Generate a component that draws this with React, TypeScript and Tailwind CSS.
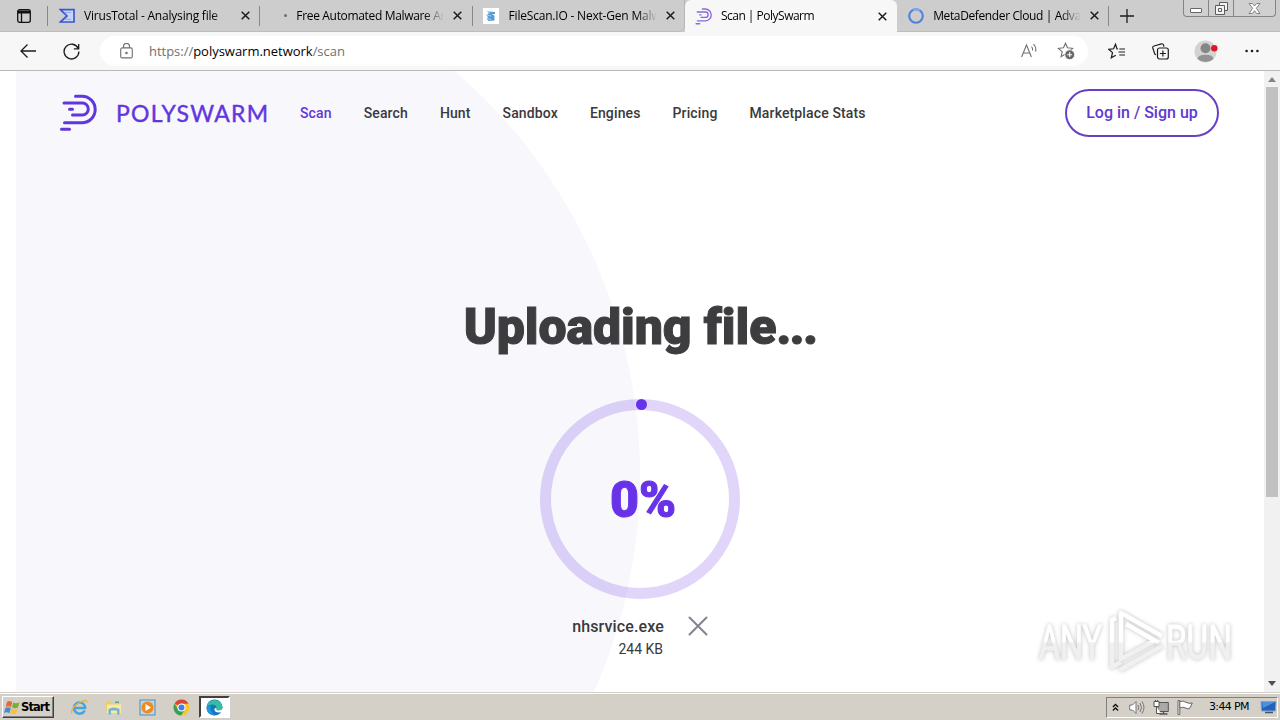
import React from "react";
import clsx from "clsx";

const CloseIcon = () => (
  <svg className="h-[9px] w-[9px] shrink-0" viewBox="0 0 9 9" stroke="#1c1c1c" strokeWidth={1.5}>
    <path d="M0.7 0.7L8.3 8.3M8.3 0.7L0.7 8.3" />
  </svg>
);

const PolyMark = ({ className, color = "#6236dd" }: { className: string; color?: string }) => (
  <svg className={className} viewBox="0 0 38 38" fill="none" stroke={color} strokeWidth={3} strokeLinecap="round">
    <path d="M16.5 2.3H23A13.2 13.2 0 0 1 23 28.7H5.5" />
    <path d="M5 9H23.3A6 6 0 0 1 23.3 21H13.5" />
    <path d="M10.5 15.2H13.5M2.5 35.3H10.5" />
  </svg>
);

const VirusTotalIcon = () => (
  <svg className="h-4 w-4" viewBox="0 0 16 16" fill="none" stroke="#3b57d4" strokeWidth={1.7}>
    <path d="M1.4 1.6H15V14H1.4L8 8Z" fill="#cbd5f6" />
    <path d="M5.5 4.5H12M5.5 11.3H12" strokeWidth={0.8} stroke="#8799e4" />
  </svg>
);

const LoadingDot = () => (
  <div className="ml-[13px] flex h-4 w-4 shrink-0 items-center justify-center">
    <div className="h-[3px] w-[3px] rounded-full bg-[#707070]" />
  </div>
);

const FileScanIcon = () => (
  <svg className="h-4 w-4 bg-white" viewBox="0 0 16 16">
    <path d="M5 3.5L12 4V6L8.5 6.5L11.5 7.5V12.5L5.5 13L3.5 10.5L5 9.5L3.5 7L5.5 6Z" fill="#5b9bd5" />
    <path d="M4 3.5L7 5M3.5 7L8 8M4 10.5L8 11.5" stroke="#a9cdec" />
  </svg>
);

const RingIcon = () => (
  <svg className="h-4 w-4" viewBox="0 0 16 16" fill="none">
    <circle cx="8" cy="8" r="6.8" stroke="#4a80dc" strokeWidth={2} />
    <path d="M5 2A6.8 6.8 0 0 1 12 2.5" stroke="#85a7e2" strokeWidth={2} />
  </svg>
);

const tabs = [
  { title: "VirusTotal - Analysing file", icon: <VirusTotalIcon />, tracking: "tracking-[-0.2px]" },
  { title: "Free Automated Malware An", icon: <LoadingDot />, tracking: "tracking-[-0.33px]" },
  { title: "FileScan.IO - Next-Gen Malw", icon: <FileScanIcon />, tracking: "tracking-[-0.2px]" },
  { title: "Scan | PolySwarm", icon: <PolyMark className="h-[17px] w-[17px]" color="#8a68dc" />, active: true, tracking: "tracking-[-0.5px]" },
  { title: "MetaDefender Cloud | Adva", icon: <RingIcon />, tracking: "tracking-[-0.38px]" },
];

const TabBar = () => (
  <div className="flex h-8 bg-[#cdcdcd]">
    <div className="flex w-12 shrink-0 items-center border-b border-[#bdbdbd] pl-[17px]">
      <svg className="h-[14px] w-[14px]" viewBox="0 0 14 14" fill="none" stroke="#111" strokeWidth={1.3}>
        <rect x="0.7" y="0.7" width="12.6" height="12.6" rx="2" />
        <path d="M1 3H13" strokeWidth={3} />
        <path d="M4.5 4V13" />
      </svg>
      <div className="ml-4 h-5 w-px bg-[#888]" />
    </div>
    {tabs.map((tab, i) => (
      <div
        key={tab.title}
        className={clsx(
          "flex w-[212.3px] shrink-0 items-center pl-[10px]",
          tab.active ? "rounded-t-md bg-[#f7f7f7]" : "border-b border-[#bdbdbd]",
          i === 2 && "rounded-br-md border-r border-r-[#b5b5b5]"
        )}
      >
        <div className="flex w-[17px] shrink-0 justify-center">{tab.icon}</div>
        <div
          className={clsx(
            "ml-[9px] w-[150px] shrink-0 font-['Open_Sans',sans-serif] text-xs whitespace-nowrap text-black",
            "[mask-image:linear-gradient(to_right,black_128px,transparent_148px)]",
            tab.tracking
          )}
        >
          {tab.title}
        </div>
        <div className="ml-[7px] flex">
          <CloseIcon />
        </div>
        {i !== 2 && i !== 3 && <div className="ml-auto h-5 w-px bg-[#888]" />}
      </div>
    ))}
    <div className="flex grow items-center justify-between border-b border-[#bdbdbd] pl-[11px]">
      <svg className="h-[14px] w-[14px]" viewBox="0 0 14 14" stroke="#1c1c1c" strokeWidth={1.3}>
        <path d="M7 0V14M0 7H14" />
      </svg>
      <div className="mr-1 flex h-[17px] w-[93px] self-start rounded-b-[4px] border border-t-0 border-[#858585] bg-[#d0d0d0]">
        <div className="flex w-[25px] items-end justify-center border-r border-[#858585] pb-[3px]">
          <div className="h-[5px] w-[12px] rounded-[1px] border border-[#666] bg-white" />
        </div>
        <div className="flex w-[25px] items-center justify-center border-r border-[#858585]">
          <svg className="h-[13px] w-[13px]" viewBox="0 0 13 13" fill="#f3f3f3" stroke="#5c5c5c">
            <path d="M4.5 0.5H12.5V8.5H4.5Z" />
            <path d="M0.5 3.5H9.5V12.5H0.5Z" />
            <path d="M3.5 6.5H6.5V9.5H3.5Z" />
          </svg>
        </div>
        <div className="flex grow items-center justify-center">
          <svg className="h-[11px] w-[13px]" viewBox="0 0 13 11" fill="#fff" stroke="#777" strokeWidth={0.9}>
            <path d="M1 .5H4.3L6.5 3L8.7 .5H12L8.3 5.3L12 10.5H8.7L6.5 7.7L4.3 10.5H1L4.7 5.3Z" />
          </svg>
        </div>
      </div>
    </div>
  </div>
);

const star = "M8.5 1.2L10.5 5.8L15.6 6.3L11.8 9.6L12.9 14.6L8.5 12L4.1 14.6L5.2 9.6L1.4 6.3L6.5 5.8Z";

const Toolbar = () => (
  <div className="flex h-[39px] items-center border-b border-[#b9b9b9] bg-[#f7f7f7] pl-5">
    <svg className="h-[14px] w-[16px]" viewBox="0 0 16 14" fill="none" stroke="#1c1c1c" strokeWidth={1.3}>
      <path d="M16 7H1M7.5 0.5L1 7L7.5 13.5" />
    </svg>
    <svg className="ml-[27px] h-[17px] w-[17px]" viewBox="0 0 17 17" fill="none" stroke="#1c1c1c" strokeWidth={1.3}>
      <path d="M15.2 5.4A7.4 7.4 0 1 0 15.9 8.5M15.7 1V5.8H10.9" />
    </svg>
    <div className="ml-[20px] flex h-[30px] w-[988px] items-center rounded-full bg-white pl-[20px] text-[#707070]">
      <svg className="h-[16px] w-[13px]" viewBox="0 0 13 16" fill="none" stroke="#707070" strokeWidth={1.1}>
        <rect x="0.7" y="4.9" width="11.6" height="10" rx="1.5" />
        <path d="M3.5 5V3.5A3 3 0 0 1 9.5 3.5V5" />
        <circle cx="6.5" cy="10" r="0.7" fill="#707070" />
      </svg>
      <div className="mt-px ml-[16px] font-['Open_Sans',sans-serif] text-[13px] tracking-[-0.02px] whitespace-nowrap">
        https://<span className="text-black">polyswarm.network</span>/scan
      </div>
      <svg className="mr-[20px] ml-auto h-4 w-4" viewBox="0 0 16 16" fill="none" stroke="#707070" strokeWidth={1.1}>
        <path d="M0.6 14L5.5 2L10.4 14M2.3 10H8.7M10.5 3.5Q12 5.5 11.5 7.5M12.5 1.2Q15.8 4.5 14.5 8.5" />
      </svg>
      <svg className="mr-[13px] h-[18px] w-[18px]" viewBox="0 0 18 18" fill="none" stroke="#707070" strokeWidth={1.1}>
        <path d={star} />
        <circle cx="12.7" cy="12.7" r="4.9" fill="#666" stroke="white" strokeWidth={0.8} />
        <path d="M12.7 10.3V15.1M10.3 12.7H15.1" stroke="white" />
      </svg>
    </div>
    <svg className="ml-[20px] h-[17px] w-[18px]" viewBox="0 0 18 17" fill="none" stroke="#1c1c1c" strokeWidth={1.2}>
      <path d="M10 6H9L7.5 1.2L5.6 5.8L0.8 6.3L4.5 9.6L3.3 14.8L7.8 12.2M11.3 6H17M10.5 9H17M11.3 12H17" />
    </svg>
    <svg className="ml-[26px] h-[17px] w-[17px]" viewBox="0 0 17 17" fill="none" stroke="#1c1c1c" strokeWidth={1.2}>
      <path d="M4 11.8L2.8 11.2L0.8 5Q0.4 3.5 2 3L9.5 0.8Q11 0.5 11.5 2L12 3.7" />
      <rect x="5.5" y="5" width="10.8" height="11" rx="2" />
      <path d="M10.9 7.5V13.5M7.9 10.5H13.9" />
    </svg>
    <svg className="ml-[25px] h-[23px] w-[24px]" viewBox="0 0 24 23">
      <circle cx="11.5" cy="11.5" r="11" fill="#d3d3d3" />
      <circle cx="11.5" cy="8.3" r="5" fill="#868686" />
      <path d="M3.5 19Q4 14.7 11.5 14.7Q19 14.7 19.5 19Q16 22 11.5 22Q7 22 3.5 19Z" fill="#929292" />
      <circle cx="20.3" cy="8.3" r="3.2" fill="#dd1726" />
    </svg>
    <svg className="ml-[27px] h-1 w-[14px]" viewBox="0 0 14 4" fill="#1c1c1c">
      <circle cx="1.6" cy="2" r="1.3" />
      <circle cx="7" cy="2" r="1.3" />
      <circle cx="12.4" cy="2" r="1.3" />
    </svg>
  </div>
);

const navItems = ["Scan", "Search", "Hunt", "Sandbox", "Engines", "Pricing", "Marketplace Stats"];

const SiteHeader = () => (
  <header className="flex h-[84px] items-center pr-[45px] pl-[60px]">
    <PolyMark className="-ml-px h-[38px] w-[38px]" />
    <svg className="ml-[16px] h-[28px] w-[160px]" viewBox="-3 0 160 28">
      <text
        x="0"
        y="22.5"
        textLength="152"
        lengthAdjust="spacing"
        className="fill-[#6236dd] font-['Lato',sans-serif] text-[23px]"
        stroke="#6236dd"
        strokeWidth={0.4}
        strokeLinejoin="round"
      >
        POLYSWARM
      </text>
    </svg>
    <nav className="ml-[27px] flex gap-[32px] text-sm font-medium tracking-[0.13px] whitespace-nowrap text-[#3a393c]">
      {navItems.map((item) => (
        <span key={item} className={item === "Scan" ? "text-[#6236dd]" : undefined}>
          {item}
        </span>
      ))}
    </nav>
    <button className="ml-auto h-[48px] w-[154px] rounded-full border-2 border-[#6840c4] text-base font-medium whitespace-nowrap text-[#5f38cf]">
      Log in / Sign up
    </button>
  </header>
);

const UploadProgress = () => (
  <main className="flex flex-col items-center pl-4">
    <h1 className="mt-[142px] h-[60px] text-[50px] leading-[60px] font-black tracking-[-0.1px] whitespace-nowrap text-[#3d3c3f] [font-variant-ligatures:none] [-webkit-text-stroke:1px_#3d3c3f]">
      Uploading file<span className="tracking-[-1.8px]">...</span>
    </h1>
    <div className="relative mt-[42px] h-[200px] w-[200px] rounded-full border-[11px] border-[#6833e8]/20">
      <div className="absolute -top-[11px] left-[85px] h-[11px] w-[11px] rounded-full bg-[#6833e8]" />
      <div className="flex h-full items-center justify-center pt-[2px] pl-[6px] text-[50px] font-black text-[#6833e8] [-webkit-text-stroke:1px_#6833e8]">
        0%
      </div>
    </div>
    <div className="mt-[17px] flex w-[136px]">
      <div className="flex w-[92px] flex-col items-end whitespace-nowrap text-[#3a393c]">
        <div className="text-base leading-[22px] font-medium tracking-[0.13px]">nhsrvice.exe</div>
        <div className="pr-px text-sm leading-[22px]">244 KB</div>
      </div>
      <svg className="ml-[24px] h-[20px] w-[20px]" viewBox="0 0 20 20" stroke="#85838f" strokeWidth={2} strokeLinecap="round">
        <path d="M1.5 1.5L18.5 18.5M18.5 1.5L1.5 18.5" />
      </svg>
    </div>
  </main>
);

const Watermark = () => (
  <svg
    className="absolute top-[530px] left-[1028px] h-[80px] w-[216px] drop-shadow-[0_0_2px_rgba(0,0,0,0.25)]"
    viewBox="0 0 216 80"
    fill="none"
  >
    <defs>
      <linearGradient id="shade" x1="0" y1="20" x2="0" y2="62" gradientUnits="userSpaceOnUse">
        <stop offset="0.5" stopColor="#fff" />
        <stop offset="0.52" stopColor="#f0f0f0" />
      </linearGradient>
    </defs>
    <g fill="url(#shade)" stroke="url(#shade)" strokeWidth={1} className="font-['Roboto',sans-serif] text-[49px]">
      <text x="11" y="58" textLength="63" lengthAdjust="spacingAndGlyphs">ANY</text>
      <text x="138" y="58" textLength="66" lengthAdjust="spacingAndGlyphs">RUN</text>
    </g>
    <g stroke="url(#shade)" strokeWidth={4.5} strokeLinejoin="round">
      <path d="M134 35L93 12V58L128 39" />
      <path d="M98 23L131 42M84 61V19L88 17M84 61V66L93 61M92 69L134 45" />
    </g>
  </svg>
);

const Scrollbar = () => (
  <div className="flex w-4 shrink-0 flex-col items-center bg-[#f1f1f1]">
    <svg className="mt-[6px] h-[5px] w-[8px]" viewBox="0 0 8 5" fill="#858585">
      <path d="M0 5L4 0L8 5Z" />
    </svg>
    <div className="mt-[5px] h-[410px] w-3 bg-[#c1c1c1]" />
    <svg className="mt-auto mb-[6px] h-[5px] w-[8px]" viewBox="0 0 8 5" fill="#505050">
      <path d="M0 0L4 5L8 0Z" />
    </svg>
  </div>
);

const WindowsFlag = () => (
  <svg className="h-[17px] w-[17px]" viewBox="0 0 17 17">
    <path d="M3 3Q5.5 1.2 8.3 3L7 8.2Q4.5 6.5 1.7 8Z" fill="#e56a35" />
    <path d="M9.2 3.5Q12 5 15.5 3.2L14 8.5Q11 10 8 8.5Z" fill="#79af39" />
    <path d="M1.4 8.9Q4 7.5 6.8 9L5.4 14.3Q2.8 12.6 0 14Z" fill="#478bcb" />
    <path d="M7.6 9.4Q10.6 11 13.8 9.4L12.3 14.6Q9 16 6.2 14.5Z" fill="#f3c33d" />
  </svg>
);

const TaskbarIcons = () => (
  <>
    <svg className="ml-[17px] h-[17px] w-[17px]" viewBox="0 0 17 17" fill="none">
      <path d="M13.7 11.5A5.6 5.6 0 1 1 14 7.5V9H4" stroke="#45a6df" strokeWidth={2.6} />
      <path d="M1 14.5Q-1 10 7 4.5Q16-1 16 3.5" stroke="#e4b640" strokeWidth={1.3} />
    </svg>
    <svg className="ml-[17px] h-[17px] w-[17px]" viewBox="0 0 17 17">
      <path d="M1 2.5H6L7 4H15V13H1Z" fill="#e9ce71" />
      <path d="M2 5.5H16V14H2Z" fill="#f8e9a5" />
      <path d="M3.5 15.5V10Q9 7 14.5 10V15.5H12V11.5H6V15.5Z" fill="#6eb5d8" />
      <path d="M10 2.5H14V4H10Z" fill="#5ba56b" />
    </svg>
    <svg className="ml-[17px] h-[17px] w-[17px]" viewBox="0 0 17 17">
      <rect x="1" y="1" width="15" height="15" fill="#b8d6ec" stroke="#598cac" />
      <circle cx="8.5" cy="8.5" r="6" fill="#f18a1d" />
      <path d="M6.5 5L12 8.5L6.5 12Z" fill="#fff" />
    </svg>
    <svg className="ml-[17px] h-[17px] w-[17px]" viewBox="0 0 17 17">
      <circle cx="8.5" cy="8.5" r="8" fill="#f7c62d" />
      <path d="M8.5 8.5L1.6 4.5A8 8 0 0 1 15.5 4.8H8.5Z" fill="#dc4437" />
      <path d="M1.6 4.5A8 8 0 0 0 8 16.5L12 10.5L8.5 12L5 10.5Z" fill="#36a154" />
      <circle cx="8.5" cy="8.5" r="4" fill="#fff" />
      <circle cx="8.5" cy="8.5" r="3" fill="#4080ec" />
    </svg>
    <div className="ml-[9px] flex h-[22px] w-[31px] items-center justify-center border-2 border-t-[#404040] border-r-white border-b-white border-l-[#404040] bg-white">
      <svg className="h-[17px] w-[17px]" viewBox="0 0 17 17">
        <circle cx="8.5" cy="8.5" r="8" fill="#1677bd" />
        <path d="M0.6 8A8 8 0 0 1 16.5 8Q16.5 11.5 12.5 11.5Q9.5 11.5 10.5 9Q10.5 6 7 5.5Q3 5 0.6 8Z" fill="#35bfa2" />
        <path d="M10.5 9Q9.5 11.5 12.5 11.5Q15.5 11.5 17 9.5V13L14.5 13.3Q9 14 8.3 10.5Q8.5 8.5 10.5 9Z" fill="#fff" />
        <path d="M5 7Q3.3 12.5 9 16.5Q1 16 .5 9Q2 6 5 7Z" fill="#2296da" />
      </svg>
    </div>
  </>
);

const Taskbar = () => (
  <div className="flex h-7 items-center border-t border-[#d4d0c8] bg-[#d4d0c8] pt-px pl-0.5 font-['DejaVu_Sans',sans-serif] shadow-[inset_0_1px_0_white]">
    <div className="flex h-[22px] w-[52px] items-center border border-t-white border-r-[#404040] border-b-[#404040] border-l-white pl-px text-black shadow-[inset_-1px_-1px_0_#808080]">
      <WindowsFlag />
      <span className="mt-px text-[11.5px] font-bold tracking-[-0.9px]">Start</span>
    </div>
    <TaskbarIcons />
    <div className="mr-0.5 ml-auto flex h-[21px] w-[172px] items-center border border-t-[#808080] border-r-white border-b-white border-l-[#808080]">
      <svg className="ml-[5px] h-[9px] w-[7px]" viewBox="0 0 8 9" fill="none" stroke="#111" strokeWidth={1.5}>
        <path d="M1 4L4 1L7 4M1 8L4 5L7 8" />
      </svg>
      <svg className="ml-[10px] h-[15px] w-[16px]" viewBox="0 0 16 15" fill="none" stroke="#777">
        <path d="M.7 5H3.5L7 1.5V13.5L3.5 10H.7Z" fill="#fff" />
        <path d="M9 5Q10.5 7.5 9 10M11 3Q14 7.5 11 12M13 1.5Q17 7.5 13 13.5" />
      </svg>
      <svg className="ml-[8px] h-[15px] w-[16px]" viewBox="0 0 16 15" fill="none" stroke="#555">
        <path d="M5 2.5H15.3V11.5H5Z" fill="#aaa" />
        <path d="M6.5 14H14.5M10.5 11.5V14" strokeWidth={1.4} />
        <path d="M1 1.5H6V6.5H1ZM3.5 6.5V13.5H8M2.5 0V2M4.5 0V2" fill="#fff" />
      </svg>
      <svg className="ml-[8px] h-[15px] w-[16px]" viewBox="0 0 16 15" fill="#fff" stroke="#666">
        <path d="M1 .5H2.8V14.5H1Z" />
        <path d="M2.8 1.5Q6 .3 9 2.3Q12 4 15.3 3L12.5 8.7Q10.5 9.2 8 7.8Q5.5 6.5 2.8 8Z" />
      </svg>
      <span className="mt-px ml-[16px] text-[11px] tracking-[-0.65px] whitespace-nowrap text-black">3:44 PM</span>
      <svg className="mr-0 ml-auto h-[14px] w-[17px]" viewBox="0 0 17 14">
        <path d="M1 1.5H16L15.3 11H1.5Z" fill="#2462b8" stroke="#79a6d1" />
        <path d="M2 2H15L3 8Z" fill="#4d90db" />
        <path d="M5 12.5H13" stroke="#3c5670" strokeWidth={1.5} />
      </svg>
    </div>
  </div>
);

const App: React.FC = () => {
  return (
    <div className="flex h-[720px] w-[1280px] flex-col overflow-hidden bg-white font-['Roboto',sans-serif]">
      <TabBar />
      <Toolbar />
      <div className="relative flex h-[621px] overflow-hidden">
        {/* Large tinted disc behind the page */}
        <svg className="absolute top-0 left-4 h-[621px] w-[640px]" viewBox="16 71 640 621">
          <circle cx="107" cy="475" r="533" fill="#f7f7fc" />
        </svg>
        <div className="relative w-[1264px] shrink-0">
          <SiteHeader />
          <UploadProgress />
          <Watermark />
        </div>
        <Scrollbar />
      </div>
      <Taskbar />
    </div>
  );
};

export default App;
